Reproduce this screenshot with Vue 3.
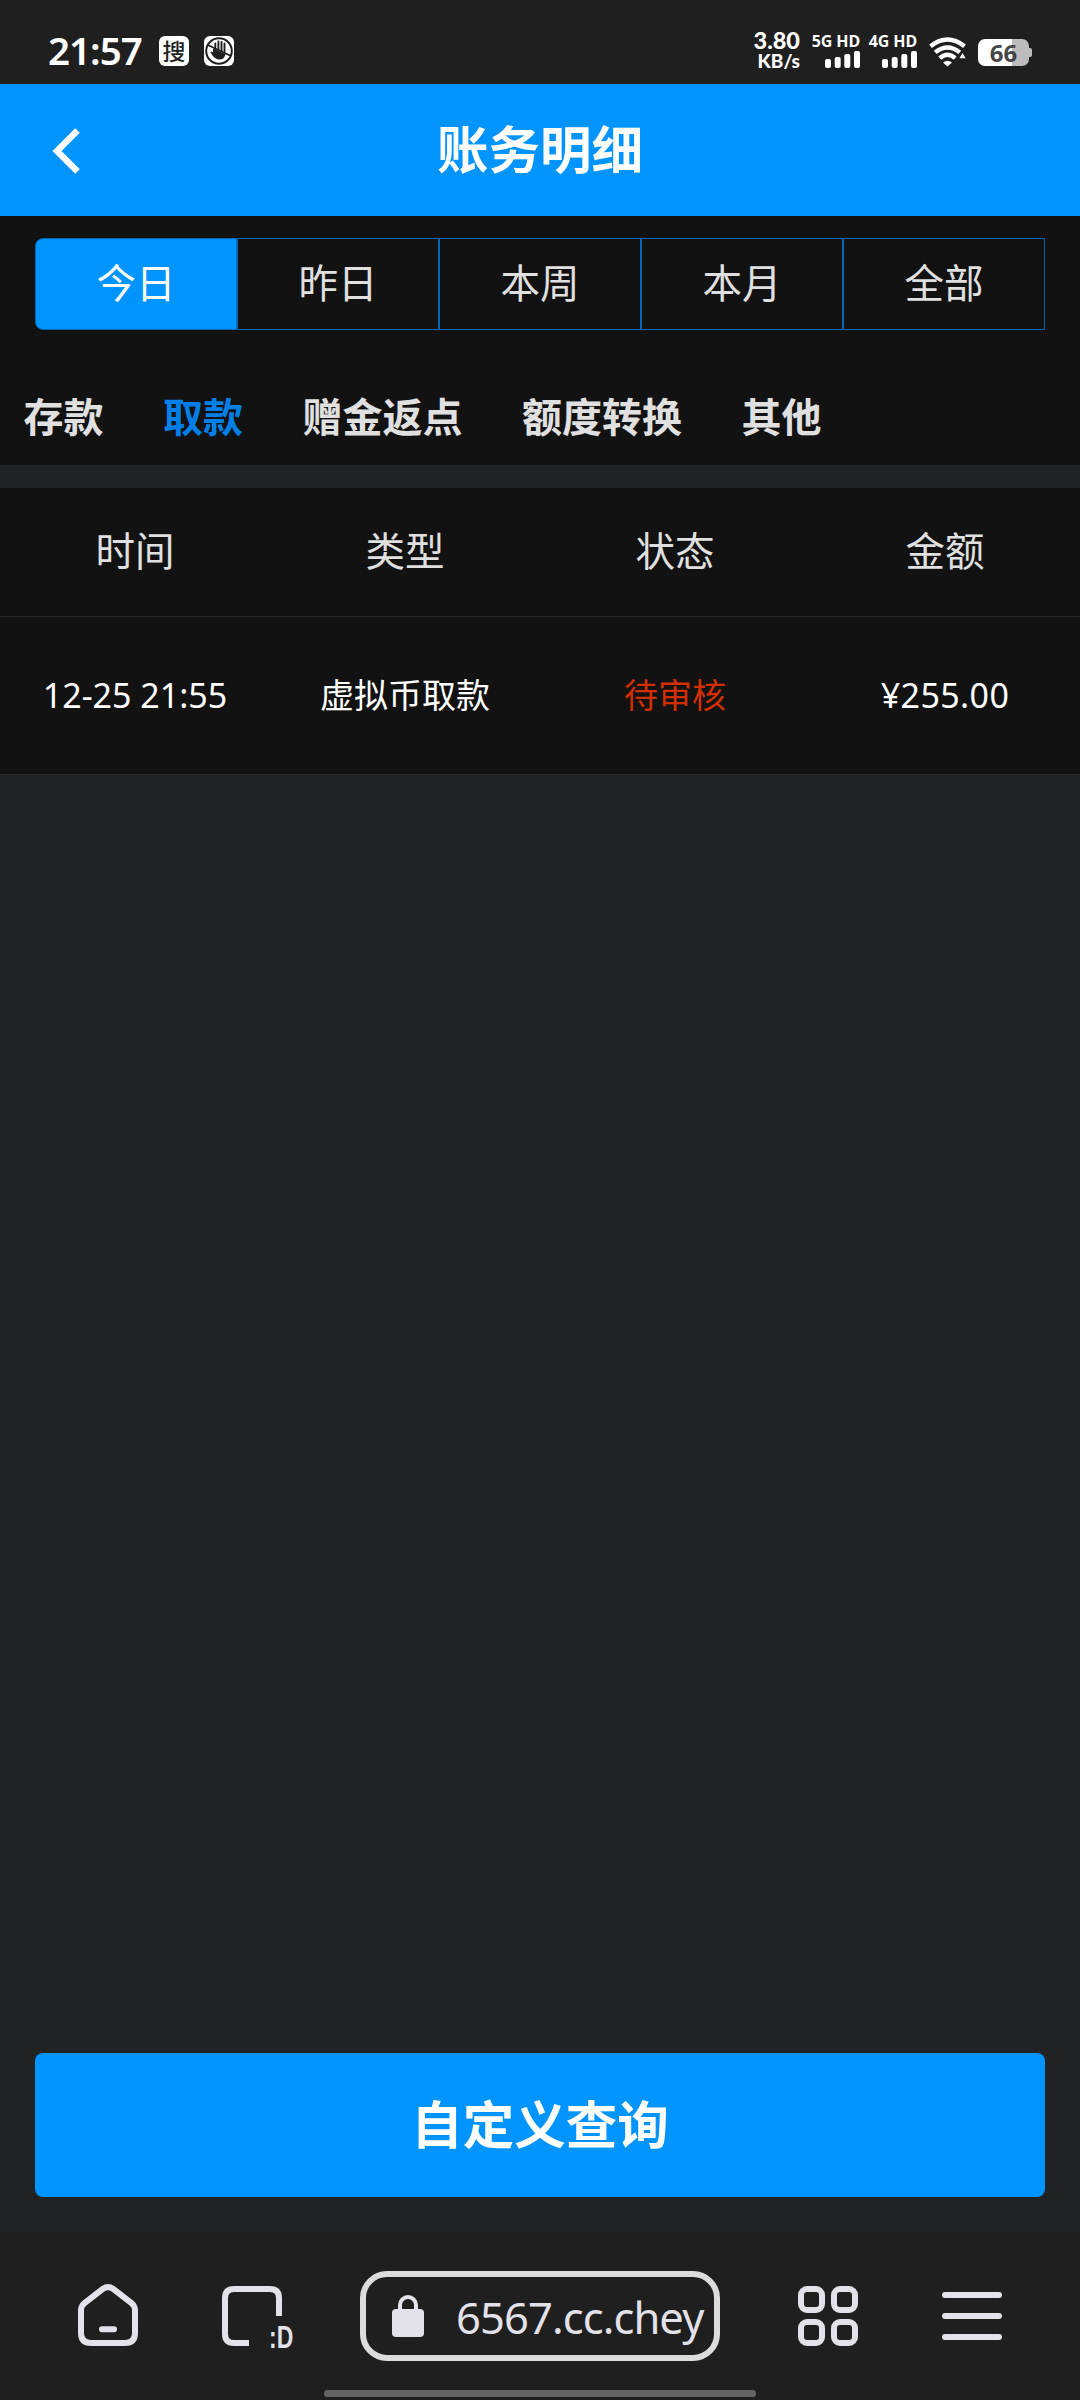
<script setup>
const ranges = ['今日', '昨日', '本周', '本月', '全部']
const activeRange = '今日'
const kinds = ['存款', '取款', '赠金返点', '额度转换', '其他']
const activeKind = '取款'
const columns = ['时间', '类型', '状态', '金额']
const records = [
  { time: '12-25 21:55', type: '虚拟币取款', status: '待审核', amount: '¥255.00' }
]
const networks = ['5G HD', '4G HD']
</script>

<template>
  <div class="screen">
    <div class="status">
      <span class="clock">21:57</span>
      <span class="badge">搜</span>
      <svg class="hand" width="30" height="30" viewBox="0 0 30 30">
        <rect width="30" height="30" rx="6" fill="#fff" />
        <circle cx="15" cy="15" r="12.8" fill="none" stroke="#1f1f1f" stroke-width="2" />
        <path d="M9 12.500 21.500 18Q20.500 23.500 15.500 23.500Q11.500 23.500 8.500 19.500L6.500 16.200Q7 14.800 9 16.500Z" fill="#1f1f1f" />
        <path d="M11.300 7.500V13M14.400 5.500V14M17.500 6V15M20.500 7.500V16" stroke="#1f1f1f" stroke-width="1.900" stroke-linecap="round" />
        <path d="M3.800 9 26 19.500" stroke="#1f1f1f" stroke-width="1.800" />
      </svg>
      <div class="speed"><span class="rate">3.80</span><span class="unit">KB/s</span></div>
      <div v-for="n in networks" :key="n" class="network">
        <span>{{ n }}</span>
        <svg width="35" height="17" viewBox="0 0 35 17" fill="#fff">
          <rect y="8" width="6" height="9" rx="2" />
          <rect x="9.7" y="6" width="6" height="11" rx="2" />
          <rect x="19.3" y="3" width="6" height="14" rx="2" />
          <rect x="29" width="6" height="17" rx="2" />
        </svg>
      </div>
      <svg class="wifi" width="37" height="30" viewBox="0 0 37 30">
        <g fill="none" stroke="#fff" stroke-width="4.4">
          <path d="M1.5 9.2Q18.500 -4 35.500 9.200" />
          <path d="M6.200 15.400Q18.500 5.500 30.800 15.400" />
          <path d="M10.800 21.200Q18.500 14.400 26.200 21.200" />
        </g>
        <path d="M14 25.500q4.500-3.600 9 0L18.500 29.500z" fill="#fff" />
        <path d="M33.500 14.500 38 22h-9z" fill="#fff" stroke="#1f1f1f" stroke-width="1.500" />
      </svg>
      <div class="battery"><span>66</span></div>
    </div>

    <header class="titlebar">
      <svg class="back" width="30" height="48" viewBox="0 0 30 48">
        <path d="M26.500 3.500 6 24 26.500 44.500" fill="none" stroke="#fff" stroke-width="6.500" />
      </svg>
      <h1>账务明细</h1>
    </header>

    <section class="filters">
      <div class="ranges">
        <div v-for="r in ranges" :key="r" class="range" :class="{ active: r === activeRange }"><span>{{ r }}</span></div>
      </div>
      <nav class="kinds">
        <span v-for="k in kinds" :key="k" :class="{ active: k === activeKind }">{{ k }}</span>
      </nav>
    </section>

    <section class="table">
      <div class="row head"><span v-for="c in columns" :key="c">{{ c }}</span></div>
      <div v-for="r in records" :key="r.time" class="row">
        <span>{{ r.time }}</span><span>{{ r.type }}</span><span class="pending">{{ r.status }}</span><span class="amount">{{ r.amount }}</span>
      </div>
    </section>

    <button class="query">自定义查询</button>

    <footer class="browser">
      <div class="tools">
        <svg class="home" width="60" height="62" viewBox="0 0 60 62" fill="none" stroke="#e3e1ea" stroke-width="6">
          <path d="M3 26.500Q3 22 6.500 19L25 4.800Q30 1.400 35 4.800L53.500 19Q57 22 57 26.500V49Q57 59 47 59H13Q3 59 3 49Z" />
          <path d="M24 45.300H36" stroke-linecap="round" />
        </svg>
        <div class="tabs">
          <svg width="60" height="60" viewBox="0 0 60 60" fill="none" stroke="#e3e1ea" stroke-width="6">
            <path d="M57 30V12Q57 3 48 3H12Q3 3 3 12V48Q3 57 12 57H27" />
          </svg>
          <span class="face">:D</span>
        </div>
        <div class="url">
          <svg width="32" height="42" viewBox="0 0 32 42">
            <path d="M8 16V10a8 8 0 0 1 16 0V16" fill="none" stroke="#e3e1ea" stroke-width="4" />
            <rect y="14" width="32" height="28" rx="4" fill="#e3e1ea" />
          </svg>
          <span>6567.cc.chey</span>
        </div>
        <svg class="grid" width="60" height="60" viewBox="0 0 60 60" fill="none" stroke="#e3e1ea" stroke-width="6">
          <rect x="3" y="3" width="21" height="21" rx="6" />
          <rect x="36" y="3" width="21" height="21" rx="6" />
          <rect x="3" y="36" width="21" height="21" rx="6" />
          <rect x="36" y="36" width="21" height="21" rx="6" />
        </svg>
        <svg class="menu" width="60" height="48" viewBox="0 0 60 48" stroke="#e3e1ea" stroke-width="6" stroke-linecap="round">
          <path d="M3 3H57M3 24H57M3 45H57" />
        </svg>
      </div>
      <div class="gesture"></div>
    </footer>
  </div>
</template>

<style>
body { background: #212224; }
</style>

<style scoped>
.screen {
  width: 1080px;
  height: 2400px;
  display: flex;
  flex-direction: column;
  background: #212224;
  color: #e0e0e0;
  font-family: "Noto Sans", "Noto Sans CJK SC", sans-serif;
  overflow: hidden;
}
.status {
  height: 84px;
  flex: none;
  display: flex;
  align-items: flex-start;
  background: #1f1f1f;
  color: #fff;
}
.clock {
  margin: 30px 0 0 48px;
  width: 111px;
  font-size: 38.5px;
  line-height: 40px;
  font-weight: 600;
  letter-spacing: -1px;
}
.badge {
  width: 30px;
  height: 30px;
  margin-top: 36px;
  border-radius: 6px;
  background: #fff;
  color: #1f1f1f;
  font: 500 23px/28px "Noto Sans CJK SC", sans-serif;
  text-align: center;
}
.hand { margin: 36px 0 0 15px; }
.speed {
  width: 66px;
  margin: 27px 0 0 500px;
  display: flex;
  flex-direction: column;
  align-items: flex-end;
  font-family: Lato, sans-serif;
  font-weight: 900;
}
.rate { font-size: 23.5px; line-height: 27px; }
.unit { font-size: 19px; line-height: 14px; }
.network {
  width: 48px;
  margin: 33px 0 0 12px;
  display: flex;
  flex-direction: column;
  align-items: flex-end;
  white-space: nowrap;
  font-weight: 700;
  font-size: 16px;
  letter-spacing: -0.1px;
  line-height: 16px;
}
.network + .network { margin-left: 9px; }
.network svg { margin-top: 2px; }
.wifi { margin: 37px 0 0 12px; overflow: visible; }
.battery {
  position: relative;
  width: 51px;
  height: 27px;
  margin: 39px 0 0 12px;
  border-radius: 7px;
  background: linear-gradient(90deg, #fff 34px, #bcbcbc 34px);
  color: #464646;
  font-weight: 700;
  font-size: 24px;
  line-height: 27px;
  text-align: center;
}
.battery::after {
  content: "";
  position: absolute;
  right: -3px;
  top: 9px;
  width: 4px;
  height: 9px;
  border-radius: 0 2px 2px 0;
  background: #bcbcbc;
}
.titlebar {
  height: 132px;
  flex: none;
  display: grid;
  grid-template-columns: 1fr auto 1fr;
  align-items: center;
  background: #0094ff;
}
.back { margin: 2px 0 0 51px; }
h1 {
  margin: -3px 0 0;
  font-size: 51.5px;
  line-height: 60px;
  font-weight: 700;
  color: #fff;
}
.filters {
  height: 249px;
  flex: none;
  background: #121212;
}
.ranges {
  display: flex;
  margin: 0 35px;
  padding-top: 22px;
}
.range {
  flex: 1;
  height: 90px;
  border: 1px solid #0068b4;
  text-align: center;
  font-size: 39.5px;
  line-height: 88px;
}
.range.active {
  color: #fff;
  background: #0094ff;
  border-radius: 8px 0 0 8px;
}
.kinds {
  display: flex;
  gap: 59.500px;
  margin: 57px 0 0 23.5px;
  font-size: 40px;
  line-height: 60px;
  font-weight: 700;
}
.kinds .active { color: #0080e6; }
.table { margin-top: 23px; background: #121212; }
.row {
  display: flex;
  height: 157px;
  border-bottom: 1px solid #29292b;
  color: #fff;
  font-size: 34px;
  line-height: 156px;
  text-align: center;
}
.row span { flex: 1; }
.row .amount { letter-spacing: 0.4px; }
.row.head {
  height: 128px;
  color: #e0e0e0;
  font-size: 39.5px;
  line-height: 127px;
}
.row .pending { color: #d22f00; }
.query {
  height: 144px;
  margin: auto 35px 35px;
  padding: 0 0 3px;
  border: 0;
  border-radius: 8px;
  background: #0094ff;
  color: #fff;
  font: inherit;
  font-size: 51.5px;
  line-height: 138px;
  font-weight: 700;
}
.browser {
  height: 168px;
  flex: none;
  background: #1f1f1f;
}
.tools {
  display: flex;
  align-items: center;
  height: 90px;
  padding: 39px 78px 0;
}
.home { margin-top: -2px; }
.tabs { position: relative; width: 60px; height: 60px; margin: 0 78px 0 84px; }
.face {
  position: absolute;
  left: 47px;
  top: 37px;
  color: #e3e1ea;
  font: 700 31px/30px "Liberation Sans", sans-serif;
  transform: scaleX(0.74);
  transform-origin: left;
}
.url {
  box-sizing: border-box;
  width: 360px;
  height: 90px;
  border: 6px solid #dcdcdc;
  border-radius: 27px;
  display: flex;
  align-items: center;
  padding-left: 26px;
  overflow: hidden;
  color: #e3e1ea;
  font-size: 43.5px;
  font-weight: 400;
  letter-spacing: -0.9px;
  white-space: nowrap;
}
.url svg { flex: none; margin-right: 32px; }
.url span { padding-top: 2px; }
.grid { margin: 0 84px 0 78px; }
.gesture {
  width: 432px;
  height: 7px;
  margin: 29px auto 0;
  border-radius: 4px;
  background: #646464;
}
</style>
